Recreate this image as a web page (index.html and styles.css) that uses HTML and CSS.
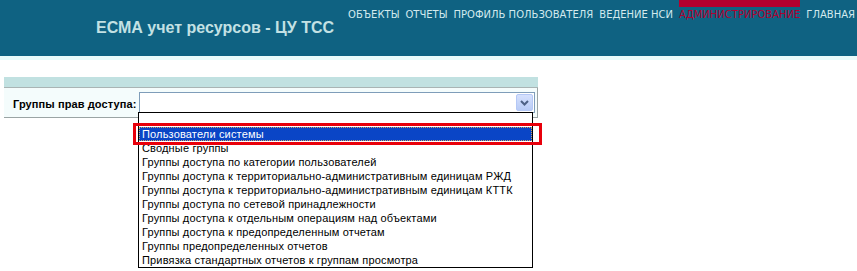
FILE: index.html
```html
<!DOCTYPE html>
<html lang="ru">
<head>
<meta charset="utf-8">
<title>ЕСМА учет ресурсов - ЦУ ТСС</title>
<link rel="stylesheet" href="styles.css">
</head>
<body>
<header class="top">
  <div class="title">ЕСМА учет ресурсов - ЦУ ТСС</div>
  <nav class="nav">
    <a class="nav-item">ОБЪЕКТЫ</a>
    <a class="nav-item">ОТЧЕТЫ</a>
    <a class="nav-item">ПРОФИЛЬ ПОЛЬЗОВАТЕЛЯ</a>
    <a class="nav-item">ВЕДЕНИЕ НСИ</a>
    <a class="nav-item active">АДМИНИСТРИРОВАНИЕ</a>
    <a class="nav-item">ГЛАВНАЯ</a>
  </nav>
</header>
<div class="strip"></div>
<main class="content">
  <section class="panel">
    <div class="panel-bar"></div>
    <div class="panel-row">
      <label class="field-label">Группы прав доступа:</label>
      <div class="select">
        <span class="select-btn">
          <svg width="9" height="6" viewBox="0 0 9 6"><path d="M1 1 L4.5 4.5 L8 1" fill="none" stroke="#4d6185" stroke-width="2"/></svg>
        </span>
      </div>
    </div>
  </section>
  <ul class="listbox">
    <li class="opt">&nbsp;</li>
    <li class="opt selected">Пользователи системы</li>
    <li class="opt">Сводные группы</li>
    <li class="opt">Группы доступа по категории пользователей</li>
    <li class="opt">Группы доступа к территориально-административным единицам РЖД</li>
    <li class="opt">Группы доступа к территориально-административным единицам КТТК</li>
    <li class="opt">Группы доступа по сетевой принадлежности</li>
    <li class="opt">Группы доступа к отдельным операциям над объектами</li>
    <li class="opt">Группы доступа к предопределенным отчетам</li>
    <li class="opt">Группы предопределенных отчетов</li>
    <li class="opt">Привязка стандартных отчетов к группам просмотра</li>
  </ul>
  <div class="highlight-box"></div>
</main>
</body>
</html>
```
FILE: styles.css
```css
html, body {
  margin: 0;
  padding: 0;
  background: #ffffff;
}
body {
  font-family: "Liberation Sans", Arial, sans-serif;
  min-height: 271px;
}
.top {
  height: 56px;
  background: #0f6282;
  display: flex;
  align-items: flex-start;
}
.title {
  margin: 19px 0 0 96px;
  font-size: 16px;
  font-weight: bold;
  color: #c3e1e4;
  line-height: 18px;
  white-space: nowrap;
}
.nav {
  display: flex;
  margin-left: auto;
  padding-right: 2px;
  gap: 6px;
}
.nav-item {
  display: block;
  padding-top: 9px;
  font-family: "DejaVu Sans", Verdana, sans-serif;
  font-size: 10px;
  line-height: 12px;
  color: #d3eaee;
  white-space: nowrap;
}
.nav-item.active {
  color: #b3002f;
  border-top: 7px solid #b3002f;
  padding-top: 2px;
}
.strip {
  height: 4px;
  background: #e9fbfb;
}
.content {
  position: relative;
  height: 194px;
  padding: 17px 0 0 4px;
}
.panel {
  width: 534px;
}
.panel-bar {
  height: 10px;
  background: #c1e1e1;
  border-bottom: 1px solid #a9b4b4;
}
.panel-row {
  height: 29px;
  background: #f4fcfc;
  border-right: 1px solid #9aa4a4;
  border-bottom: 1px solid #9aa4a4;
  display: flex;
  align-items: flex-start;
}
.field-label {
  margin: 9px 0 0 9px;
  width: 126px;
  font-size: 11px;
  font-weight: bold;
  color: #000;
  line-height: 14px;
  white-space: nowrap;
  letter-spacing: 0.1px;
}
.select {
  margin-top: 4px;
  width: 393px;
  height: 19px;
  background: #fff;
  border: 1px solid #7f9db9;
  display: flex;
  justify-content: flex-end;
  align-items: center;
  padding-right: 1px;
}
.select-btn {
  width: 15px;
  height: 15px;
  border: 1px solid #b4c8f6;
  border-radius: 2px;
  background: linear-gradient(#d5e1fd, #b8cbf6);
  display: flex;
  align-items: center;
  justify-content: center;
}
.listbox {
  position: absolute;
  left: 138px;
  top: 52px;
  width: 393px;
  margin: 0;
  padding: 0;
  list-style: none;
  border: 1px solid #000;
  background: #fff;
}
.opt {
  height: 14px;
  line-height: 14px;
  padding-left: 3px;
  font-size: 11px;
  letter-spacing: 0.16px;
  color: #000;
  white-space: nowrap;
}
.opt.selected {
  background: #0a45c6;
  color: #fff;
  outline: 1px dotted #d4a060;
  outline-offset: -1px;
}
.highlight-box {
  position: absolute;
  left: 133px;
  top: 63px;
  width: 403px;
  height: 16px;
  border: 3px solid #e8000b;
}
```
